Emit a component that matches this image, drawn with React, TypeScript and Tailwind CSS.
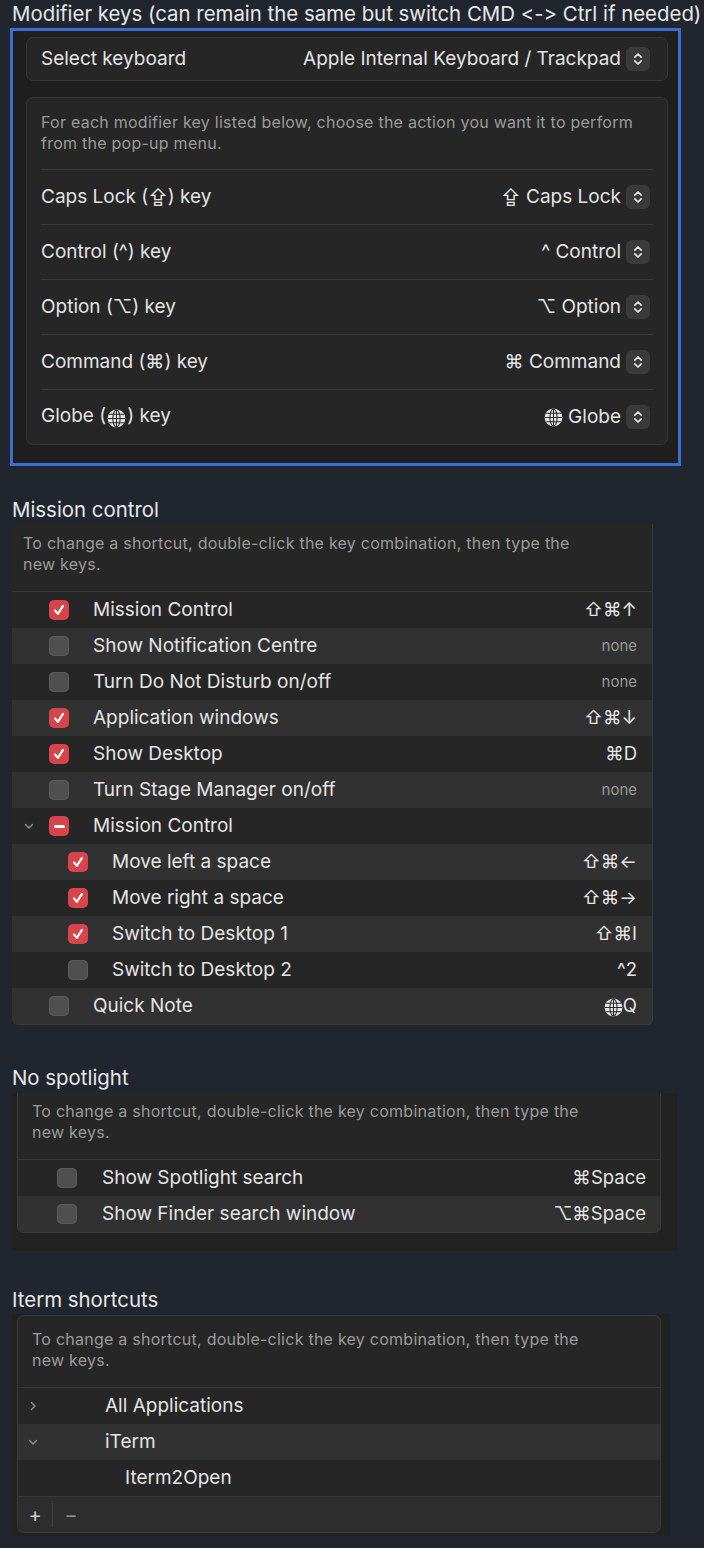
import React from 'react';

type CheckState = 'on' | 'off' | 'mixed';

const Globe = ({ size = 19 }: { size?: number }) => (
  <svg width={size} height={size} viewBox="0 0 20 20" className="inline-block">
    <circle cx="10" cy="10" r="9.4" fill="#e6e6e6" />
    <g fill="none" stroke="#262626" strokeWidth="1.1">
      <ellipse cx="10" cy="10" rx="3.8" ry="9" />
      <path d="M10 0.8v18.4M0.8 10h18.4M2.2 5.6h15.6M2.2 14.4h15.6" />
    </g>
  </svg>
);

const Stepper = () => (
  <span className="ml-[5px] flex h-[24px] w-[24px] items-center justify-center rounded-[6px] bg-[#3a3a3a]">
    <svg width="10" height="16" viewBox="0 0 10 16" fill="none" stroke="#e8e8e8" strokeWidth="1.7" strokeLinecap="round" strokeLinejoin="round">
      <path d="M1.8 6.2L5 3l3.2 3.2" />
      <path d="M1.8 9.8L5 13l3.2-3.2" />
    </svg>
  </span>
);

const Check = ({ state }: { state: CheckState }) => {
  if (state === 'off') {
    return <span className="block h-[20px] w-[20px] rounded-[5px] bg-[#4f4f4f] shadow-[inset_0_0_0_1px_#5a5a5a]" />;
  }
  return (
    <span className="flex h-[20px] w-[20px] items-center justify-center rounded-[5px] bg-[#d8444b]">
      {state === 'on' ? (
        <svg width="14" height="14" viewBox="0 0 14 14" fill="none" stroke="#fff" strokeWidth="2.2" strokeLinecap="round" strokeLinejoin="round">
          <path d="M3 7.4l2.8 3.4L11 2.8" />
        </svg>
      ) : (
        <span className="block h-[3px] w-[11px] rounded-full bg-white" />
      )}
    </span>
  );
};

const Chevron = ({ open }: { open: boolean }) => (
  <svg width="12" height="12" viewBox="0 0 12 12" fill="none" stroke="#8c8c8c" strokeWidth="1.5" strokeLinecap="round" strokeLinejoin="round">
    {open ? <path d="M2.5 4.5L6 8l3.5-3.5" /> : <path d="M4.5 2.5L8 6l-3.5 3.5" />}
  </svg>
);

const Hint = ({ className }: { className: string }) => (
  <p className={`text-[16px] leading-[21px] tracking-[0.25px] text-[#9b9b9b] ${className}`}>
    To change a shortcut, double-click the key combination, then type the
    <br />
    new keys.
  </p>
);

const modifiers: { label: React.ReactNode; value: React.ReactNode }[] = [
  { label: <>Caps Lock (⇪) key</>, value: <>⇪ Caps Lock</> },
  { label: <>Control (^) key</>, value: <>^ Control</> },
  { label: <>Option (⌥) key</>, value: <>⌥ Option</> },
  { label: <>Command (⌘) key</>, value: <>⌘ Command</> },
  {
    label: (
      <>
        Globe (<span className="mx-[1px] inline-block align-[-1px]"><Globe /></span>) key
      </>
    ),
    value: (
      <>
        <span className="mr-[5px] inline-block align-[-3px]"><Globe /></span>Globe
      </>
    ),
  },
];

type McRow = { label: string; keys: React.ReactNode; state: CheckState; level: 0 | 1; chevron?: boolean };

const missionRows: McRow[] = [
  { label: 'Mission Control', keys: '⇧⌘↑', state: 'on', level: 0 },
  { label: 'Show Notification Centre', keys: 'none', state: 'off', level: 0 },
  { label: 'Turn Do Not Disturb on/off', keys: 'none', state: 'off', level: 0 },
  { label: 'Application windows', keys: '⇧⌘↓', state: 'on', level: 0 },
  { label: 'Show Desktop', keys: '⌘D', state: 'on', level: 0 },
  { label: 'Turn Stage Manager on/off', keys: 'none', state: 'off', level: 0 },
  { label: 'Mission Control', keys: '', state: 'mixed', level: 0, chevron: true },
  { label: 'Move left a space', keys: '⇧⌘←', state: 'on', level: 1 },
  { label: 'Move right a space', keys: '⇧⌘→', state: 'on', level: 1 },
  { label: 'Switch to Desktop 1', keys: '⇧⌘I', state: 'on', level: 1 },
  { label: 'Switch to Desktop 2', keys: '^2', state: 'off', level: 1 },
  { label: 'Quick Note', keys: <><span className="inline-block align-[-1px]"><Globe /></span>Q</>, state: 'off', level: 0 },
];

const Keys = ({ keys }: { keys: React.ReactNode }) =>
  keys === 'none' ? (
    <span className="text-[15px] text-[#9a9a9a]">none</span>
  ) : (
    <span className="text-[18.5px]">{keys}</span>
  );

export default function App() {
  return (
    <div className="min-h-[1548px] w-[704px] bg-[#21262e] pb-[12px] font-['Inter','Liberation_Sans',sans-serif] text-[#e4e4e4] [font-feature-settings:'calt'_0] [font-variant-ligatures:none]">
      <h2 className="whitespace-nowrap pl-[12px] text-[20.4px] leading-[28px] text-[#e6e8eb]">
        Modifier keys (can remain the same but switch CMD &lt;-&gt; Ctrl if needed)
      </h2>

      <div className="mx-[10px] w-[671px] border-[3px] border-[#3c6ed2] bg-[#1f1f1f] pl-[13px] pr-[10px] pt-[6px] pb-[18px]">
        <div className="flex h-[44px] items-center justify-between rounded-[7px] border border-[#363636] bg-[#262626] pl-[14px] pr-[17px] text-[19px]">
          <span>Select keyboard</span>
          <span className="flex items-center">
            Apple Internal Keyboard / Trackpad
            <Stepper />
          </span>
        </div>

        <div className="mt-[16px] rounded-[7px] border border-[#363636] bg-[#262626] px-[14px]">
          <p className="pt-[14px] pb-[15px] text-[16px] leading-[21px] tracking-[0.25px] text-[#9b9b9b]">
            For each modifier key listed below, choose the action you want it to perform
            <br />
            from the pop-up menu.
          </p>
          {modifiers.map((m, i) => (
            <div key={i} className="flex h-[55px] items-center justify-between border-t border-[#383838] pr-[3px] text-[19px]">
              <span>{m.label}</span>
              <span className="flex items-center">
                {m.value}
                <Stepper />
              </span>
            </div>
          ))}
        </div>
      </div>

      <h2 className="mt-[30px] pl-[12px] text-[20.4px] leading-[28px] text-[#e6e8eb]">Mission control</h2>
      <div className="ml-[12px] w-[641px] overflow-hidden rounded-b-[6px] border-r border-b border-[#3a3a3a] bg-[#262626]">
        <Hint className="pl-[11px] pt-[9px] pb-[16px]" />
        <div className="border-t border-[#363636]">
          {missionRows.map((r, i) => (
            <div
              key={i}
              className={`flex h-[36px] items-center pr-[15px] text-[19px] ${i % 2 === 1 ? 'bg-[#313131]' : 'bg-[#262626]'}`}
            >
              <span className="flex w-[37px] justify-center pr-[3px]">{r.chevron ? <Chevron open /> : null}</span>
              <span className={r.level === 1 ? 'ml-[19px]' : ''}>
                <Check state={r.state} />
              </span>
              <span className="ml-[24px] flex-1">{r.label}</span>
              <Keys keys={r.keys} />
            </div>
          ))}
        </div>
      </div>

      <h2 className="mt-[39px] pl-[12px] text-[20.4px] leading-[28px] text-[#e6e8eb]">No spotlight</h2>
      <div className="ml-[12px] mt-[1px] w-[665px] bg-[#222222] pb-[18px] pl-[5px] pr-[16px]">
        <div className="overflow-hidden rounded-b-[7px] border-x border-b border-[#3a3a3a] bg-[#262626]">
          <Hint className="pl-[14px] pt-[8px] pb-[16px]" />
          <div className="border-t border-[#363636]">
            {['Show Spotlight search', 'Show Finder search window'].map((t, i) => (
              <div key={t} className={`flex h-[36px] items-center pr-[14px] ${i === 1 ? 'bg-[#313131]' : ''}`}>
                <span className="ml-[39px]">
                  <Check state="off" />
                </span>
                <span className="ml-[25px] flex-1 text-[19px]">{t}</span>
                <span className="text-[18.5px]">{i === 0 ? '⌘Space' : '⌥⌘Space'}</span>
              </div>
            ))}
          </div>
        </div>
      </div>

      <h2 className="mt-[34px] pl-[12px] text-[20.4px] leading-[29px] text-[#e6e8eb]">Iterm shortcuts</h2>
      <div className="ml-[12px] w-[658px] bg-[#222222] pb-[3px] pl-[5px] pr-[9px] pt-[1px]">
        <div className="overflow-hidden rounded-[7px] border border-[#3a3a3a] bg-[#262626]">
          <Hint className="pl-[14px] pt-[13px] pb-[16px]" />
          <div className="border-t border-[#363636] text-[19px]">
            <div className="flex h-[36px] items-center">
              <span className="ml-[9px] w-[12px]">
                <Chevron open={false} />
              </span>
              <span className="ml-[66px]">All Applications</span>
            </div>
            <div className="flex h-[36px] items-center bg-[#313131]">
              <span className="ml-[9px] w-[12px]">
                <Chevron open />
              </span>
              <span className="ml-[66px]">iTerm</span>
            </div>
            <div className="flex h-[36px] items-center">
              <span className="ml-[107px]">Iterm2Open</span>
            </div>
          </div>
          <div className="flex h-[36px] items-center border-t border-[#383838] bg-[#2d2d2d] text-[#cfcfcf]">
            <span className="flex w-[34px] justify-center text-[20px] leading-none">+</span>
            <span className="h-[24px] w-px bg-[#454545]" />
            <span className="flex w-[36px] justify-center text-[20px] leading-none text-[#8a8a8a]">−</span>
          </div>
        </div>
      </div>
    </div>
  );
}
